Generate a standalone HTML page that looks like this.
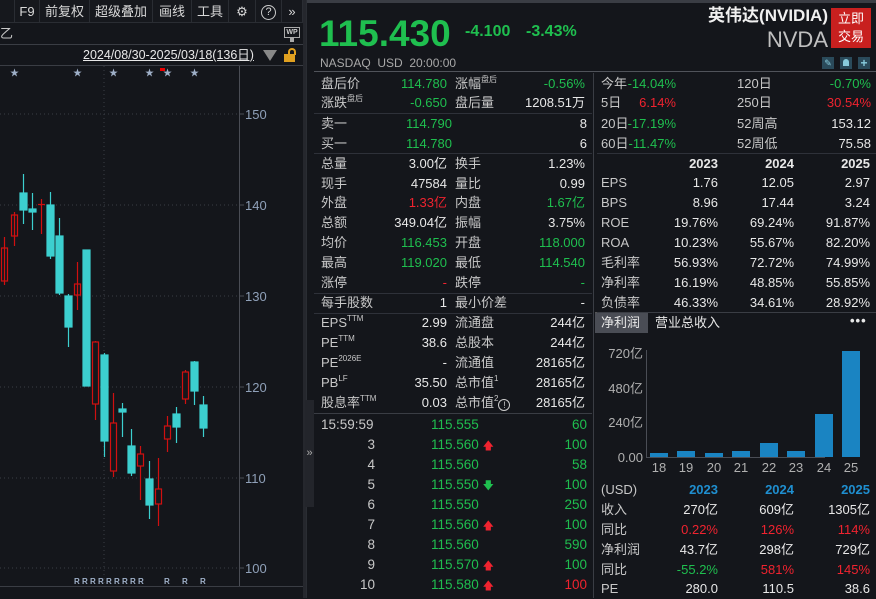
<!DOCTYPE html><html><head><meta charset="utf-8"><style>
*{margin:0;padding:0;box-sizing:border-box}
body{width:876px;height:598px;background:#14161b;font-family:"Liberation Sans","Noto Sans CJK SC",sans-serif;color:#e6e6e6;font-size:13px;position:relative;overflow:hidden}
.p{position:absolute;white-space:nowrap;line-height:20px;height:20px}
.g{color:#1fbf4f}.r{color:#f0232f}.w{color:#e8e8e8}.lb{color:#c8c8c8}
.hl{position:absolute;height:1px;background:#2e3139}
.vl{position:absolute;width:1px;background:#2e3139}
sup{font-size:8px;line-height:0;position:relative;top:-6px;vertical-align:baseline}
.btn{position:absolute;top:0;height:23px;line-height:23px;text-align:center;color:#d8d8d8;font-size:13px;border-right:1px solid #2a2d33}
</style></head><body>
<div style="position:absolute;left:0;top:0;width:303px;height:23px;background:#16181d;border-bottom:1px solid #2a2d33"></div>
<div class="btn" style="left:14px;width:26px;border-left:1px solid #2a2d33">F9</div>
<div class="btn" style="left:40px;width:50px">前复权</div>
<div class="btn" style="left:90px;width:63px">超级叠加</div>
<div class="btn" style="left:153px;width:39px">画线</div>
<div class="btn" style="left:192px;width:37px">工具</div>
<div class="btn" style="left:229px;width:27px">⚙</div>
<div class="btn" style="left:256px;width:26px"><span style="display:inline-block;width:15px;height:15px;border:1.5px solid #ccc;border-radius:50%;line-height:12px;font-size:11px;vertical-align:middle">?</span></div>
<div class="btn" style="left:282px;width:21px">»</div>
<div class="p lb" style="left:0;top:24px">乙</div>
<div style="position:absolute;left:284px;top:27px;width:16px;height:11px;border:1px solid #aaa;font-size:7px;color:#ccc;text-align:center;line-height:9px;font-weight:bold">WP</div>
<div style="position:absolute;left:290px;top:38px;width:4px;height:4px;background:#aaa"></div>
<div class="hl" style="left:0;top:44px;width:303px;background:#3a3d44"></div>
<div class="p w" style="left:83px;top:45px;font-size:12.5px;text-decoration:underline">2024/08/30-2025/03/18(136日)</div>
<div style="position:absolute;left:263px;top:50px;border-left:7px solid transparent;border-right:7px solid transparent;border-top:11px solid #888"></div>
<div style="position:absolute;left:284px;top:54px;width:11px;height:8px;background:#e0a020"></div>
<div style="position:absolute;left:288px;top:48px;width:8px;height:7px;border:2px solid #e0a020;border-bottom:none;border-radius:4px 4px 0 0"></div>
<div class="hl" style="left:0;top:65px;width:303px;background:#3a3d44"></div>
<div style="position:absolute;left:303px;top:0;width:3px;height:598px;background:#25272d"></div>
<svg style="position:absolute;left:0;top:66px" width="303" height="532">
<g fill="#9fb0c8" font-size="9">
<text x="10" y="10">★</text><text x="73" y="10">★</text><text x="109" y="10">★</text><text x="145" y="10">★</text><text x="163" y="10">★</text><text x="190" y="10">★</text></g>
<rect x="160" y="2" width="5" height="3" fill="#e00"/>
<g stroke="#3a3d44" stroke-dasharray="1,3"><line x1="0" y1="48" x2="239" y2="48"/><line x1="0" y1="139" x2="239" y2="139"/><line x1="0" y1="230" x2="239" y2="230"/><line x1="0" y1="321" x2="239" y2="321"/><line x1="0" y1="412" x2="239" y2="412"/><line x1="0" y1="502" x2="239" y2="502"/><line x1="104" y1="0" x2="104" y2="520"/></g>
<line x1="239.5" y1="0" x2="239.5" y2="520" stroke="#4a4d55"/>
<g stroke="#4a4d55"><line x1="239" y1="48" x2="244" y2="48"/><line x1="239" y1="139" x2="244" y2="139"/><line x1="239" y1="230" x2="244" y2="230"/><line x1="239" y1="321" x2="244" y2="321"/><line x1="239" y1="412" x2="244" y2="412"/><line x1="239" y1="502" x2="244" y2="502"/></g>
<g fill="#8fa0b8" font-size="13"><text x="245" y="53">150</text><text x="245" y="144">140</text><text x="245" y="235">130</text><text x="245" y="326">120</text><text x="245" y="417">110</text><text x="245" y="507">100</text></g>
<g fill="#9fb0c8" font-size="8" font-weight="bold"><text x="74" y="518">R R R R R R R R R</text><text x="164" y="518">R</text><text x="182" y="518">R</text><text x="200" y="518">R</text></g>
<line x1="0" y1="520.5" x2="303" y2="520.5" stroke="#3a3d44"/>
<g transform="translate(0,-66)" stroke-width="1.2">
<g stroke="#d01010" fill="none">
<line x1="4.5" y1="237" x2="4.5" y2="285"/><rect x="1.5" y="248" width="6" height="33"/>
<line x1="14.5" y1="212" x2="14.5" y2="246"/><rect x="11.5" y="215" width="6" height="21"/>
<line x1="41.5" y1="199" x2="41.5" y2="234"/><line x1="38" y1="204.5" x2="45" y2="204.5"/>
<line x1="77.5" y1="262" x2="77.5" y2="310"/><rect x="74.5" y="284" width="6" height="11"/>
<line x1="95.5" y1="341" x2="95.5" y2="420"/><rect x="92.5" y="342" width="6" height="62" fill="#14161b"/>
<line x1="113.5" y1="393" x2="113.5" y2="477"/><rect x="110.5" y="423" width="6" height="48" fill="#14161b"/>
<line x1="140.5" y1="446" x2="140.5" y2="500"/><rect x="137.5" y="454" width="6" height="12" fill="#14161b"/>
<line x1="158.5" y1="458" x2="158.5" y2="526"/><rect x="155.5" y="489" width="6" height="15" fill="#14161b"/>
<line x1="167.5" y1="416" x2="167.5" y2="452"/><rect x="164.5" y="426" width="6" height="13" fill="#14161b"/>
<line x1="185.5" y1="370" x2="185.5" y2="404"/><rect x="182.5" y="372" width="6" height="27" fill="#14161b"/>
</g>
<g stroke="#3ccfcf" fill="#3ccfcf">
<line x1="23.5" y1="174" x2="23.5" y2="224"/><rect x="20" y="193" width="7" height="17"/>
<line x1="32.5" y1="193" x2="32.5" y2="230"/><rect x="29" y="209" width="7" height="3"/>
<line x1="50.5" y1="192" x2="50.5" y2="259"/><rect x="47" y="205" width="7" height="51"/>
<line x1="59.5" y1="218" x2="59.5" y2="295"/><rect x="56" y="236" width="7" height="57"/>
<line x1="68.5" y1="294" x2="68.5" y2="347"/><rect x="65" y="296" width="7" height="31"/>
<rect x="83" y="250" width="7" height="136"/>
<line x1="104.5" y1="353" x2="104.5" y2="457"/><rect x="101" y="355" width="7" height="86"/>
<line x1="122.5" y1="403" x2="122.5" y2="437"/><rect x="119" y="409" width="7" height="3"/>
<line x1="131.5" y1="429" x2="131.5" y2="476"/><rect x="128" y="446" width="7" height="27"/>
<line x1="149.5" y1="461" x2="149.5" y2="519"/><rect x="146" y="479" width="7" height="26"/>
<line x1="176.5" y1="407" x2="176.5" y2="443"/><rect x="173" y="414" width="7" height="13"/>
<line x1="194.5" y1="361" x2="194.5" y2="405"/><rect x="191" y="362" width="7" height="29"/>
<line x1="203.5" y1="396" x2="203.5" y2="437"/><rect x="200" y="405" width="7" height="23"/>
</g></g>
</svg>
<div style="position:absolute;left:306px;top:0;width:1px;height:598px;background:#2a2d33"></div>
<div style="position:absolute;left:305px;top:400px;width:9px;height:107px;background:#23252b;color:#aaa;font-size:11px;line-height:107px;text-align:center">»</div>
<div style="position:absolute;left:307px;top:0;width:569px;height:3px;background:#3a3d44"></div>
<div class="p g" style="left:319px;top:14px;font-size:37px;line-height:40px;height:40px;font-weight:bold">115.430</div>
<div class="p g" style="left:465px;top:22px;font-size:16px;font-weight:bold">-4.100</div>
<div class="p g" style="left:526px;top:22px;font-size:16px;font-weight:bold">-3.43%</div>
<div class="p" style="right:48px;top:6px;font-size:17px;font-weight:bold;color:#f0f0f0">英伟达(NVIDIA)</div>
<div class="p" style="right:48px;top:28px;font-size:22px;color:#c0c0c0;line-height:24px">NVDA</div>
<div style="position:absolute;left:831px;top:8px;width:40px;height:40px;background:#c8201f;color:#fff;font-size:13px;line-height:18px;text-align:center;padding-top:2px">立即<br>交易</div>
<div class="p lb" style="left:320px;top:53px;font-size:12px;color:#a8a8a8">NASDAQ&nbsp; USD&nbsp; 20:00:00</div>
<div style="position:absolute;left:822px;top:57px;width:12px;height:12px;background:#2a4a5a;color:#8cd;font-size:9px;text-align:center;line-height:12px">✎</div>
<div style="position:absolute;left:840px;top:57px;width:12px;height:12px;background:#2a4a5a"><div style="margin:2px auto;width:6px;height:7px;background:#8cd;border-radius:3px 3px 0 0"></div></div>
<div style="position:absolute;left:858px;top:57px;width:12px;height:12px;background:#2a4a5a;color:#8cd;font-size:12px;text-align:center;line-height:12px;font-weight:bold">+</div>
<div class="hl" style="left:314px;top:71px;width:562px;background:#50535a"></div>
<div class="vl" style="left:593px;top:73px;height:525px;background:#3a3d44"></div>
<div style="position:absolute;left:595px;top:312px;width:5px;height:20px;background:#555"></div>
<div class="p lb" style="left:321px;top:74px">盘后价</div><div class="p g" style="right:429px;top:74px">114.780</div><div class="p lb" style="left:455px;top:74px">涨幅<sup>盘后</sup></div><div class="p g" style="right:291px;top:74px">-0.56%</div>
<div class="p lb" style="left:321px;top:93px">涨跌<sup>盘后</sup></div><div class="p g" style="right:429px;top:93px">-0.650</div><div class="p lb" style="left:455px;top:93px">盘后量</div><div class="p w" style="right:291px;top:93px">1208.51万</div>
<div class="hl" style="left:314px;top:113px;width:278px"></div>
<div class="p lb" style="left:321px;top:114px">卖一</div><div class="p g" style="right:424px;top:114px">114.790</div><div class="p w" style="right:289px;top:114px">8</div>
<div class="p lb" style="left:321px;top:134px">买一</div><div class="p g" style="right:424px;top:134px">114.780</div><div class="p w" style="right:289px;top:134px">6</div>
<div class="hl" style="left:314px;top:153px;width:278px"></div>
<div class="p lb" style="left:321px;top:154px">总量</div><div class="p w" style="right:429px;top:154px">3.00亿</div><div class="p lb" style="left:455px;top:154px">换手</div><div class="p w" style="right:291px;top:154px">1.23%</div>
<div class="p lb" style="left:321px;top:174px">现手</div><div class="p w" style="right:429px;top:174px">47584</div><div class="p lb" style="left:455px;top:174px">量比</div><div class="p w" style="right:291px;top:174px">0.99</div>
<div class="p lb" style="left:321px;top:193px">外盘</div><div class="p r" style="right:429px;top:193px">1.33亿</div><div class="p lb" style="left:455px;top:193px">内盘</div><div class="p g" style="right:291px;top:193px">1.67亿</div>
<div class="p lb" style="left:321px;top:213px">总额</div><div class="p w" style="right:429px;top:213px">349.04亿</div><div class="p lb" style="left:455px;top:213px">振幅</div><div class="p w" style="right:291px;top:213px">3.75%</div>
<div class="p lb" style="left:321px;top:233px">均价</div><div class="p g" style="right:429px;top:233px">116.453</div><div class="p lb" style="left:455px;top:233px">开盘</div><div class="p g" style="right:291px;top:233px">118.000</div>
<div class="p lb" style="left:321px;top:253px">最高</div><div class="p g" style="right:429px;top:253px">119.020</div><div class="p lb" style="left:455px;top:253px">最低</div><div class="p g" style="right:291px;top:253px">114.540</div>
<div class="p lb" style="left:321px;top:273px">涨停</div><div class="p r" style="right:429px;top:273px">-</div><div class="p lb" style="left:455px;top:273px">跌停</div><div class="p g" style="right:291px;top:273px">-</div>
<div class="hl" style="left:314px;top:293px;width:278px"></div>
<div class="p lb" style="left:321px;top:293px">每手股数</div><div class="p w" style="right:429px;top:293px">1</div><div class="p lb" style="left:455px;top:293px">最小价差</div><div class="p w" style="right:291px;top:293px">-</div>
<div class="hl" style="left:314px;top:313px;width:278px"></div>
<div class="p lb" style="left:321px;top:313px">EPS<sup>TTM</sup></div><div class="p w" style="right:429px;top:313px">2.99</div><div class="p lb" style="left:455px;top:313px">流通盘</div><div class="p w" style="right:291px;top:313px">244亿</div>
<div class="p lb" style="left:321px;top:333px">PE<sup>TTM</sup></div><div class="p w" style="right:429px;top:333px">38.6</div><div class="p lb" style="left:455px;top:333px">总股本</div><div class="p w" style="right:291px;top:333px">244亿</div>
<div class="p lb" style="left:321px;top:353px">PE<sup>2026E</sup></div><div class="p w" style="right:429px;top:353px">-</div><div class="p lb" style="left:455px;top:353px">流通值</div><div class="p w" style="right:291px;top:353px">28165亿</div>
<div class="p lb" style="left:321px;top:373px">PB<sup>LF</sup></div><div class="p w" style="right:429px;top:373px">35.50</div><div class="p lb" style="left:455px;top:373px">总市值<sup>1</sup></div><div class="p w" style="right:291px;top:373px">28165亿</div>
<div class="p lb" style="left:321px;top:393px">股息率<sup>TTM</sup></div><div class="p w" style="right:429px;top:393px">0.03</div><div class="p lb" style="left:455px;top:393px">总市值<sup>2</sup><span style="display:inline-block;width:12px;height:12px;border:1px solid #ccc;border-radius:50%;font-size:9px;line-height:10px;text-align:center;vertical-align:-1px">!</span></div><div class="p w" style="right:291px;top:393px">28165亿</div>
<div class="hl" style="left:314px;top:413px;width:278px;background:#3a3d44"></div>
<div class="p lb" style="left:321px;top:415px;font-size:13.5px">15:59:59</div><div class="p g" style="left:431px;top:415px;font-size:13.5px">115.555</div><div class="p g" style="right:289px;top:415px;font-size:13.5px">60</div>
<div class="p lb" style="right:501px;top:435px;font-size:13.5px">3</div><div class="p g" style="left:431px;top:435px;font-size:13.5px">115.560 <span class="r" style="font-size:11px">🡅</span></div><div class="p g" style="right:289px;top:435px;font-size:13.5px">100</div>
<div class="p lb" style="right:501px;top:455px;font-size:13.5px">4</div><div class="p g" style="left:431px;top:455px;font-size:13.5px">115.560</div><div class="p g" style="right:289px;top:455px;font-size:13.5px">58</div>
<div class="p lb" style="right:501px;top:475px;font-size:13.5px">5</div><div class="p g" style="left:431px;top:475px;font-size:13.5px">115.550 <span style="font-size:11px">🡇</span></div><div class="p g" style="right:289px;top:475px;font-size:13.5px">100</div>
<div class="p lb" style="right:501px;top:495px;font-size:13.5px">6</div><div class="p g" style="left:431px;top:495px;font-size:13.5px">115.550</div><div class="p g" style="right:289px;top:495px;font-size:13.5px">250</div>
<div class="p lb" style="right:501px;top:515px;font-size:13.5px">7</div><div class="p g" style="left:431px;top:515px;font-size:13.5px">115.560 <span class="r" style="font-size:11px">🡅</span></div><div class="p g" style="right:289px;top:515px;font-size:13.5px">100</div>
<div class="p lb" style="right:501px;top:535px;font-size:13.5px">8</div><div class="p g" style="left:431px;top:535px;font-size:13.5px">115.560</div><div class="p g" style="right:289px;top:535px;font-size:13.5px">590</div>
<div class="p lb" style="right:501px;top:555px;font-size:13.5px">9</div><div class="p g" style="left:431px;top:555px;font-size:13.5px">115.570 <span class="r" style="font-size:11px">🡅</span></div><div class="p g" style="right:289px;top:555px;font-size:13.5px">100</div>
<div class="p lb" style="right:501px;top:575px;font-size:13.5px">10</div><div class="p g" style="left:431px;top:575px;font-size:13.5px">115.580 <span class="r" style="font-size:11px">🡅</span></div><div class="p r" style="right:289px;top:575px;font-size:13.5px">100</div>
<div class="p lb" style="left:601px;top:74px">今年</div><div class="p g" style="right:200px;top:74px">-14.04%</div><div class="p lb" style="left:737px;top:74px">120日</div><div class="p g" style="right:5px;top:74px">-0.70%</div>
<div class="p lb" style="left:601px;top:93px">5日</div><div class="p r" style="right:200px;top:93px">6.14%</div><div class="p lb" style="left:737px;top:93px">250日</div><div class="p r" style="right:5px;top:93px">30.54%</div>
<div class="p lb" style="left:601px;top:114px">20日</div><div class="p g" style="right:200px;top:114px">-17.19%</div><div class="p lb" style="left:737px;top:114px">52周高</div><div class="p w" style="right:5px;top:114px">153.12</div>
<div class="p lb" style="left:601px;top:134px">60日</div><div class="p g" style="right:200px;top:134px">-11.47%</div><div class="p lb" style="left:737px;top:134px">52周低</div><div class="p w" style="right:5px;top:134px">75.58</div>
<div class="hl" style="left:597px;top:153px;width:279px"></div>
<div class="p w" style="right:158px;top:154px;font-weight:bold">2023</div><div class="p w" style="right:82px;top:154px;font-weight:bold">2024</div><div class="p w" style="right:6px;top:154px;font-weight:bold">2025</div>
<div class="p lb" style="left:601px;top:173px">EPS</div><div class="p w" style="right:158px;top:173px">1.76</div><div class="p w" style="right:82px;top:173px">12.05</div><div class="p w" style="right:6px;top:173px">2.97</div>
<div class="p lb" style="left:601px;top:193px">BPS</div><div class="p w" style="right:158px;top:193px">8.96</div><div class="p w" style="right:82px;top:193px">17.44</div><div class="p w" style="right:6px;top:193px">3.24</div>
<div class="p lb" style="left:601px;top:213px">ROE</div><div class="p w" style="right:158px;top:213px">19.76%</div><div class="p w" style="right:82px;top:213px">69.24%</div><div class="p w" style="right:6px;top:213px">91.87%</div>
<div class="p lb" style="left:601px;top:233px">ROA</div><div class="p w" style="right:158px;top:233px">10.23%</div><div class="p w" style="right:82px;top:233px">55.67%</div><div class="p w" style="right:6px;top:233px">82.20%</div>
<div class="p lb" style="left:601px;top:253px">毛利率</div><div class="p w" style="right:158px;top:253px">56.93%</div><div class="p w" style="right:82px;top:253px">72.72%</div><div class="p w" style="right:6px;top:253px">74.99%</div>
<div class="p lb" style="left:601px;top:273px">净利率</div><div class="p w" style="right:158px;top:273px">16.19%</div><div class="p w" style="right:82px;top:273px">48.85%</div><div class="p w" style="right:6px;top:273px">55.85%</div>
<div class="p lb" style="left:601px;top:293px">负债率</div><div class="p w" style="right:158px;top:293px">46.33%</div><div class="p w" style="right:82px;top:293px">34.61%</div><div class="p w" style="right:6px;top:293px">28.92%</div>
<div class="hl" style="left:597px;top:312px;width:279px;background:#3a3d44"></div>
<div style="position:absolute;left:595px;top:313px;width:53px;height:20px;background:#4a4d55"></div>
<div class="p w" style="left:601px;top:313px">净利润</div>
<div class="p w" style="left:655px;top:313px">营业总收入</div>
<div class="p w" style="left:850px;top:311px;font-weight:bold;letter-spacing:1px">•••</div>
<svg style="position:absolute;left:597px;top:335px" width="279" height="145">
<g fill="#b0b0b0" font-size="13" text-anchor="end"><text x="46" y="23">720亿</text><text x="46" y="58">480亿</text><text x="46" y="92">240亿</text><text x="46" y="127">0.00</text></g>
<line x1="49.5" y1="15" x2="49.5" y2="122" stroke="#4a4d55"/>
<line x1="49" y1="122.5" x2="228" y2="122.5" stroke="#4a4d55"/>
<g fill="#1a84c2"><rect x="53" y="118" width="18" height="4"/><rect x="80" y="116" width="18" height="6"/><rect x="108" y="118" width="18" height="4"/><rect x="135" y="116" width="18" height="6"/><rect x="163" y="108" width="18" height="14"/><rect x="190" y="116" width="18" height="6"/><rect x="218" y="79" width="18" height="43"/><rect x="245" y="16" width="18" height="106"/></g>
<g fill="#b0b0b0" font-size="13" text-anchor="middle"><text x="62" y="137">18</text><text x="89" y="137">19</text><text x="117" y="137">20</text><text x="144" y="137">21</text><text x="172" y="137">22</text><text x="199" y="137">23</text><text x="227" y="137">24</text><text x="254" y="137">25</text></g>
</svg>
<div class="p lb" style="left:601px;top:480px">(USD)</div><div class="p" style="right:158px;top:480px;font-weight:bold;color:#1f8fd0">2023</div><div class="p" style="right:82px;top:480px;font-weight:bold;color:#1f8fd0">2024</div><div class="p" style="right:6px;top:480px;font-weight:bold;color:#1f8fd0">2025</div>
<div class="p lb" style="left:601px;top:500px">收入</div><div class="p w" style="right:158px;top:500px">270亿</div><div class="p w" style="right:82px;top:500px">609亿</div><div class="p w" style="right:6px;top:500px">1305亿</div>
<div class="p lb" style="left:601px;top:520px">同比</div><div class="p r" style="right:158px;top:520px">0.22%</div><div class="p r" style="right:82px;top:520px">126%</div><div class="p r" style="right:6px;top:520px">114%</div>
<div class="p lb" style="left:601px;top:540px">净利润</div><div class="p w" style="right:158px;top:540px">43.7亿</div><div class="p w" style="right:82px;top:540px">298亿</div><div class="p w" style="right:6px;top:540px">729亿</div>
<div class="p lb" style="left:601px;top:560px">同比</div><div class="p g" style="right:158px;top:560px">-55.2%</div><div class="p r" style="right:82px;top:560px">581%</div><div class="p r" style="right:6px;top:560px">145%</div>
<div class="p lb" style="left:601px;top:579px">PE</div><div class="p w" style="right:158px;top:579px">280.0</div><div class="p w" style="right:82px;top:579px">110.5</div><div class="p w" style="right:6px;top:579px">38.6</div>
</body></html>
